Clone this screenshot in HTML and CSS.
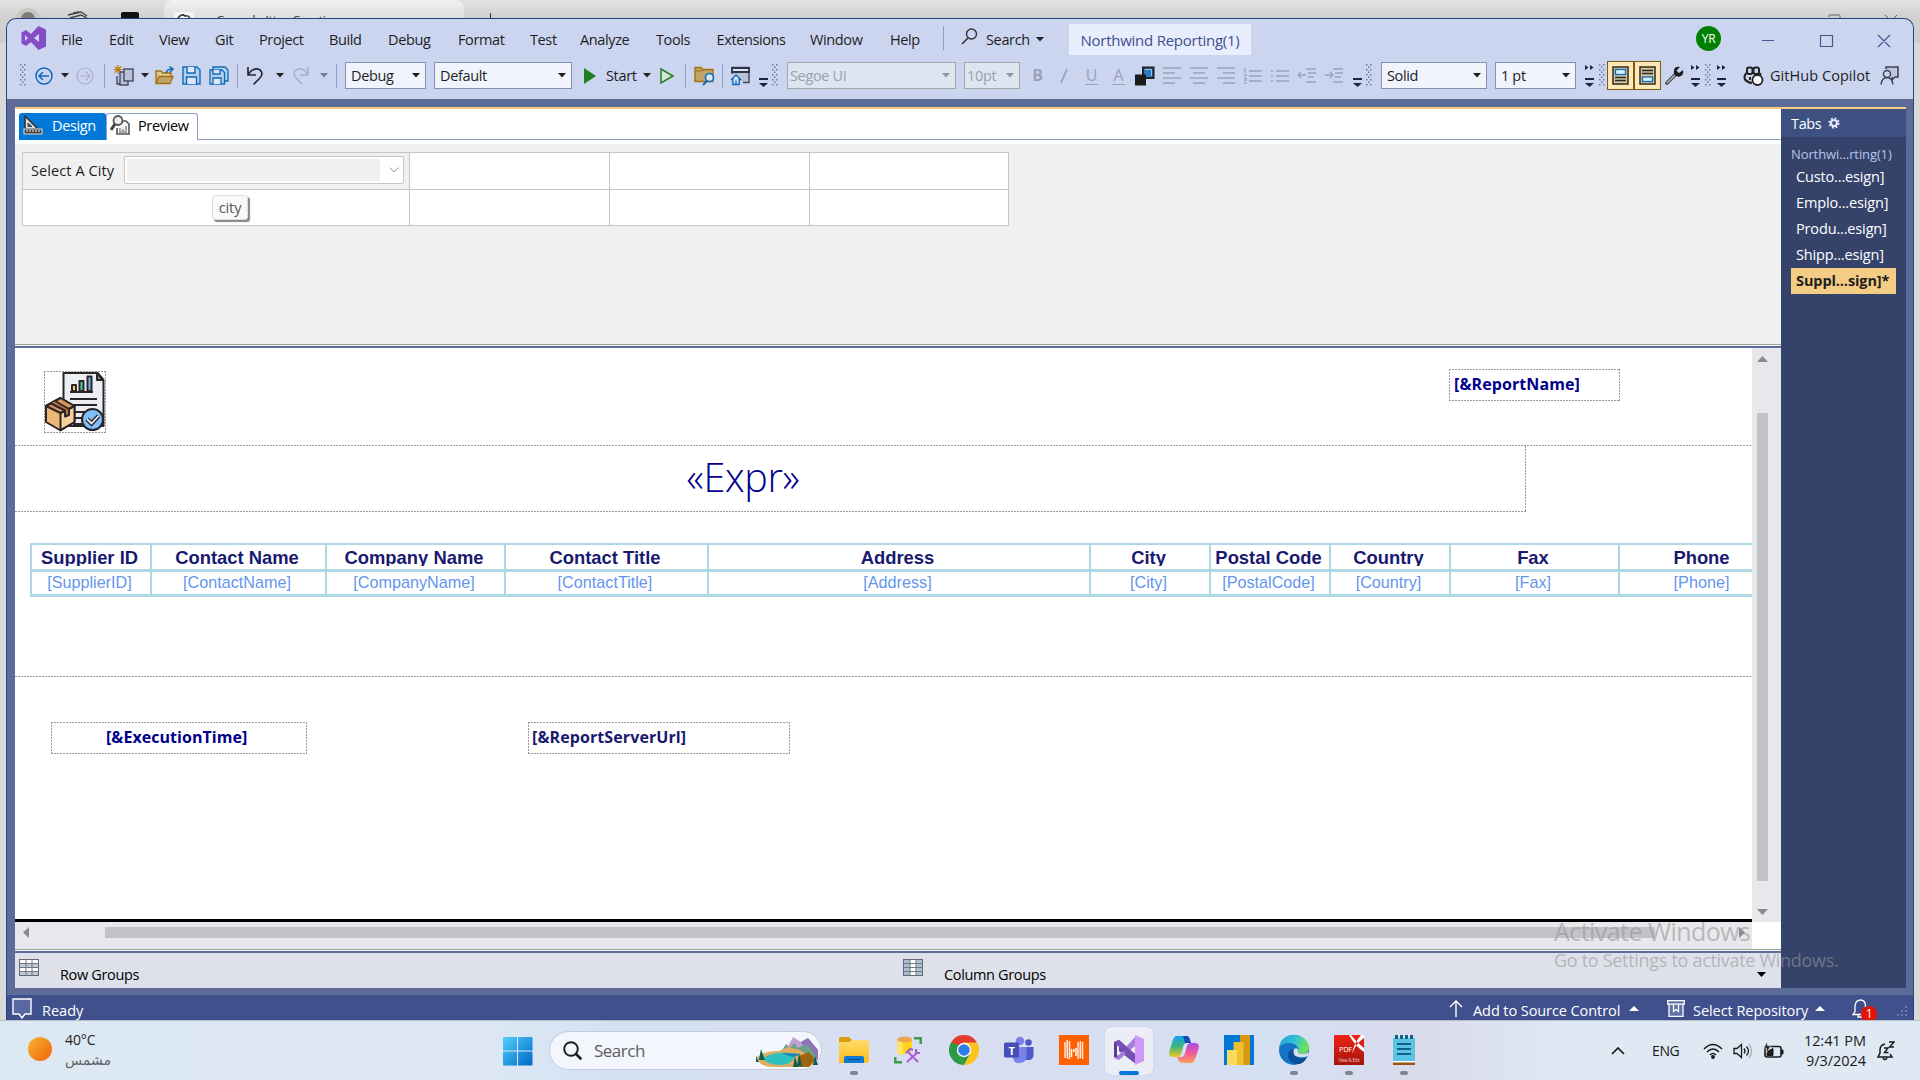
FILE: index.html
```html
<!DOCTYPE html>
<html lang="en">
<head>
<meta charset="utf-8">
<title>Northwind Reporting(1)</title>
<link rel="stylesheet" href="styles.css">
</head>
<body>
<svg class="defs" width="0" height="0">
  <defs>
    <linearGradient id="gSun" x1="0" y1="0" x2="1" y2="1"><stop offset="0" stop-color="#f5b72e"/><stop offset="1" stop-color="#f4600c"/></linearGradient>
    <linearGradient id="gWin" x1="0" y1="0" x2="1" y2="1"><stop offset="0" stop-color="#4fd0fb"/><stop offset="1" stop-color="#0067c8"/></linearGradient>
    <linearGradient id="gFold" x1="0" y1="0" x2="0" y2="1"><stop offset="0" stop-color="#ffdc6a"/><stop offset="1" stop-color="#fcbc1c"/></linearGradient>
    <linearGradient id="gEdge" x1="0" y1="0" x2="1" y2=".3"><stop offset="0" stop-color="#1f9fe0"/><stop offset=".6" stop-color="#35c6cf"/><stop offset="1" stop-color="#6fe05a"/></linearGradient>
    <linearGradient id="gCopA" x1="0" y1="0" x2="0" y2="1"><stop offset="0" stop-color="#1aa0f0"/><stop offset=".5" stop-color="#3cb878"/><stop offset="1" stop-color="#f2c81e"/></linearGradient>
    <linearGradient id="gCopB" x1="0" y1="0" x2="0" y2="1"><stop offset="0" stop-color="#a84fe8"/><stop offset=".5" stop-color="#f0589a"/><stop offset="1" stop-color="#ffa05a"/></linearGradient>
    <linearGradient id="gPdf" x1="0" y1="0" x2="0" y2="1"><stop offset="0" stop-color="#ec2418"/><stop offset="1" stop-color="#a5140c"/></linearGradient>
    <g id="grip"><path fill="#6d7ba8" d="M0 0h1.500v1.500h-1.500zM4 0h1.500v1.500h-1.500zM2 2.500h1.500v1.500h-1.500zM0 5h1.500v1.500h-1.500zM4 5h1.500v1.500h-1.500zM2 7.500h1.500v1.500h-1.500zM0 10h1.500v1.500h-1.500zM4 10h1.500v1.500h-1.500zM2 12.500h1.500v1.500h-1.500zM0 15h1.500v1.500h-1.500zM4 15h1.500v1.500h-1.500zM2 17.500h1.500v1.500h-1.500zM0 20h1.500v1.500h-1.500zM4 20h1.500v1.500h-1.500z"/></g>
    <g id="caret"><path d="M0 0h8l-4 4.500z"/></g>
    <g id="over"><path d="M0 0h9v2h-9zM0 5h9l-4.500 4z" fill="#1b2440"/></g>
    <g id="chev"><path d="M0 0l3.500 2.500-3.500 2.500zM5 0l3.500 2.500-3.500 2.500zM0 13h9v2h-9zM0 18h9l-4.500 4z" fill="#1b2440"/></g>
  </defs>
</svg>

<div class="backdrop">
  <svg class="back-left" width="150" height="18" viewBox="0 0 150 18"><circle cx="28" cy="21" r="13" fill="#c9c7c4"/><circle cx="28" cy="19" r="7" fill="#807c78"/><path d="M68 15l13-3 6 4M70 18l11-3 6 3M73 13l6 -1" fill="none" stroke="#444" stroke-width="1.300"/><rect x="121" y="12" width="18" height="9" rx="2" fill="#111"/></svg>
  <div class="back-tab"><svg width="20" height="18" viewBox="0 0 20 18"><rect width="20" height="22" y="12" rx="3" fill="#f6f6f6"/><path d="M4 18q4-5 7-2 3-1 5 2" fill="none" stroke="#333" stroke-width="1.600"/></svg><span>Console Itter Creations</span></div>
  <span class="back-plus"></span>
  <svg class="back-ctl" width="90" height="18" viewBox="0 0 90 18"><path d="M9 17v-1q0-1 1-1h9q1 0 1 1v2M65 15l4 4M77 15l-4 4" fill="none" stroke="#666"/></svg>
</div>

<div class="window">
  <header class="titlebar">
    <svg class="vs" width="25" height="26" viewBox="0 0 25 26"><path fill="#854cc7" fill-rule="evenodd" d="M17.500 1l7.500 3.500v17l-7.500 3.500-7.500-8-5 4-4.500-2.500v-11l4.500-2.500 5 4zM18 9l-5 4 5 4zM4 10v6l3-3z"/></svg>
    <nav class="menu"><span>File</span><span>Edit</span><span>View</span><span>Git</span><span>Project</span><span>Build</span><span>Debug</span><span>Format</span><span>Test</span><span>Analyze</span><span>Tools</span><span>Extensions</span><span>Window</span><span>Help</span></nav>
    <i class="vsep"></i>
    <svg class="mag" width="17" height="17" viewBox="0 0 17 17"><circle cx="10.500" cy="6" r="5" fill="none" stroke="#333" stroke-width="1.400"/><path d="M7 10l-6 6" stroke="#333" stroke-width="1.600"/></svg>
    <span class="find">Search</span>
    <svg class="find-caret" width="8" height="5"><use href="#caret" fill="#222"/></svg>
    <span class="solution">Northwind Reporting(1)</span>
    <span class="avatar">YR</span>
    <svg class="winctl" width="130" height="16" viewBox="0 0 130 16"><path d="M0 8.500h12M58.500 3.500h12v11h-12zM116 3l12 12M128 3l-12 12" fill="none" stroke="#47578d" stroke-width="1.200"/></svg>
  </header>

  <div class="toolbar">
    <svg width="6" height="23"><use href="#grip"/></svg>
    <svg width="18" height="18" viewBox="0 0 18 18" fill="none" stroke="#0c6ab8" stroke-width="1.500"><circle cx="9" cy="9" r="8"/><path d="M14 9h-9.500M8 5l-4 4 4 4"/></svg>
    <svg width="8" height="5"><use href="#caret" fill="#222"/></svg>
    <svg width="18" height="18" viewBox="0 0 18 18" fill="none" stroke="#aab0c8" stroke-width="1.200"><circle cx="9" cy="9" r="8"/><path d="M4 9h9.500M10 5l4 4-4 4"/></svg>
    <i class="vsep"></i>
    <svg width="21" height="22" viewBox="0 0 21 22"><path d="M5 0v9M.5 4.500h9M1.800 1.500l6.400 6M8.200 1.500l-6.400 6" stroke="#b87d0f" stroke-width="1.200"/><g fill="#b9c2dc" stroke="#3b4054" stroke-width="1.300"><path d="M4 11v8h5"/><rect x="7" y="7" width="8" height="13"/><rect x="11" y="4" width="9" height="12"/></g></svg>
    <svg width="8" height="5"><use href="#caret" fill="#222"/></svg>
    <svg width="20" height="19" viewBox="0 0 20 19"><path d="M1 17v-12h5l2 2h8v4" fill="#dcc899" stroke="#a4710a" stroke-width="1.400"/><path d="M1 17.500l3-7h14l-3 7z" fill="#c0a468" stroke="#a4710a" stroke-width="1.300"/><path d="M11 7q1-4 6-4M14.500 .5l3.500 2.500-3 3" fill="none" stroke="#0c6ab8" stroke-width="1.500"/></svg>
    <svg width="19" height="19" viewBox="0 0 19 19" fill="#b4cfea" stroke="#0c6ab8" stroke-width="1.400"><path d="M1 1h14l3 3v14h-17z"/><path d="M5 1v6h8v-6M4.500 18v-7h10v7" fill="#dce6f6"/></svg>
    <svg width="20" height="19" viewBox="0 0 20 19" fill="#b4cfea" stroke="#0c6ab8" stroke-width="1.300"><path d="M4 4v-3h12l3 3v11h-3"/><path d="M1 4h12l2.500 2.500v11.500h-14.500z"/><path d="M4 4v4h7v-4M4 18v-6h8v6" fill="#dce6f6"/></svg>
    <i class="vsep"></i>
    <svg width="18" height="20" viewBox="0 0 18 20" fill="none" stroke="#26293a" stroke-width="1.700"><path d="M1 1v8h8M1.500 8q5-7 11-4.500 5 4 0 9l-6 6"/></svg>
    <svg width="8" height="5"><use href="#caret" fill="#222"/></svg>
    <svg width="18" height="20" viewBox="0 0 18 20" fill="none" stroke="#a9afc6" stroke-width="1.500"><path d="M17 1v8h-8M16.500 8q-5-7-11-4.500-5 4 0 9l6 6"/></svg>
    <svg width="8" height="5"><use href="#caret" fill="#777c92"/></svg>
    <i class="vsep"></i>
    <span class="combo w81"><b>Debug</b><svg width="8" height="5"><use href="#caret" fill="#1e1e1e"/></svg></span>
    <span class="combo w138"><b>Default</b><svg width="8" height="5"><use href="#caret" fill="#1e1e1e"/></svg></span>
    <svg width="14" height="18"><path d="M1 1l12 8-12 8z" fill="#1f801f"/></svg>
    <span class="tt">Start</span>
    <svg width="8" height="5"><use href="#caret" fill="#222"/></svg>
    <svg width="16" height="18"><path d="M2 2l12 7-12 7z" fill="#d5e6dc" stroke="#1f801f" stroke-width="1.500"/></svg>
    <i class="vsep"></i>
    <svg width="21" height="20" viewBox="0 0 21 20"><path d="M1 15.500v-14h6l2 2h10v12z" fill="#c0a468" stroke="#a4710a" stroke-width="1.400"/><path d="M1 5h7l2-1.500" fill="none" stroke="#a4710a"/><circle cx="15.500" cy="11.500" r="4" fill="#d8e4f4" stroke="#0c6ab8" stroke-width="1.600"/><path d="M13 15l-4 4" stroke="#0c6ab8" stroke-width="1.900"/></svg>
    <i class="vsep"></i>
    <svg width="21" height="20" viewBox="0 0 21 20"><path d="M2 8v-6.500h17v15h-6" fill="#b9c0d8" stroke="#444960" stroke-width="1.500"/><path d="M2 2h17v4h-17z" fill="#dfe4f2" stroke="#2f3347" stroke-width="1.800"/><path d="M1 14l5-5 5 5M2.800 13v5.500h6.400v-5.500M6 18.500v-4" fill="#dce8f8" stroke="#0c6ab8" stroke-width="1.400"/></svg>
    <svg class="low" width="9" height="9"><use href="#over"/></svg>
    <svg width="6" height="23"><use href="#grip"/></svg>
    <span class="combo off w169"><b>Segoe UI</b><svg width="8" height="5"><use href="#caret" fill="#8e95a5"/></svg></span>
    <span class="combo off w56"><b>10pt</b><svg width="8" height="5"><use href="#caret" fill="#8e95a5"/></svg></span>
    <span class="fmt bold">B</span>
    <svg width="12" height="18"><path d="M9 2l-6 14" stroke="#9ba2bd" stroke-width="1.800"/></svg>
    <span class="fmt under">U</span>
    <span class="fmt color">A</span>
    <svg width="20" height="20" viewBox="0 0 20 20"><rect x="8" y="1.500" width="10.500" height="10.500" fill="#2b7cc0" stroke="#222" stroke-width="2"/><path d="M10 3.500h6.500v6.500" fill="none" stroke="#9cc4e8"/><rect y="8.500" width="11" height="11" fill="#1a1a1a"/></svg>
    <svg class="ln" width="20" height="18"><path d="M1 1h18M1 6h12M1 11h18M1 16h12"/></svg>
    <svg class="ln" width="20" height="18"><path d="M1 1h18M4 6h12M1 11h18M4 16h12"/></svg>
    <svg class="ln" width="20" height="18"><path d="M1 1h18M7 6h12M1 11h18M7 16h12"/></svg>
    <svg class="ln" width="20" height="16"><path d="M6 3h13M6 8h13M6 13h13M2 0v5M1 7h3M1 10h3M1 12h3M1 15h3"/></svg>
    <svg class="ln" width="20" height="16"><path d="M6 3h13M6 8h13M6 13h13M1 3h2M1 8h2M1 13h2"/></svg>
    <svg class="ln" width="20" height="16"><path d="M9 1h10M11 5h8M11 9h6M9 14h10M1 7h8M4 4l-3 3 3 3"/></svg>
    <svg class="ln" width="20" height="16"><path d="M9 1h10M11 5h8M11 9h6M9 14h10M1 7h8M6 4l3 3-3 3"/></svg>
    <svg class="low" width="9" height="9"><use href="#over"/></svg>
    <svg width="6" height="23"><use href="#grip"/></svg>
    <span class="combo w106"><b>Solid</b><svg width="8" height="5"><use href="#caret" fill="#1e1e1e"/></svg></span>
    <span class="combo w81"><b>1 pt</b><svg width="8" height="5"><use href="#caret" fill="#1e1e1e"/></svg></span>
    <svg width="9" height="22"><use href="#chev"/></svg>
    <svg width="6" height="23"><use href="#grip"/></svg>
    <span class="toggle"><svg width="17" height="19" viewBox="0 0 17 19"><rect x="1" y="1" width="15" height="17" fill="#cfc4a2" stroke="#3a3624" stroke-width="1.600"/><rect x="3.500" y="3.500" width="10" height="5" fill="#dceefa" stroke="#0c6ab8" stroke-width="1.300"/><path d="M3 11.500h11M3 14.500h11" stroke="#2a281e" stroke-width="1.300"/></svg></span>
    <span class="toggle"><svg width="17" height="19" viewBox="0 0 17 19"><rect x="1" y="1" width="15" height="17" fill="#cfc4a2" stroke="#3a3624" stroke-width="1.600"/><rect x="3.500" y="11" width="10" height="4.500" fill="#dceefa" stroke="#0c6ab8" stroke-width="1.300"/><path d="M3 4.500h11M3 7.500h11" stroke="#2a281e" stroke-width="1.300"/></svg></span>
    <svg width="19" height="19" viewBox="0 0 19 19"><path d="M2 17l8-8" stroke="#444" stroke-width="3.600" stroke-linecap="round"/><path d="M2 17l8-8" stroke="#b9bfd2" stroke-width="1.200"/><path d="M15 1q-5-1-6 3-1 3 1 5.500 3 2 6 .5 3-2 2-6l-4 3-2.500-2.500z" fill="#1c1c1c"/></svg>
    <svg width="9" height="22"><use href="#chev"/></svg>
    <svg width="6" height="23"><use href="#grip"/></svg>
    <svg width="9" height="22"><use href="#chev"/></svg>
    <svg width="21" height="20" viewBox="0 0 21 20"><g fill="none" stroke="#222" stroke-width="2"><rect x="4" y="1.500" width="5.500" height="6.500" rx="2"/><rect x="10.500" y="1.500" width="5.500" height="6.500" rx="2"/><path d="M3.500 7q-3 3-1.500 6.500 2.500 3 7 3.500M16.500 7l1.500 2M7 11v3"/></g><circle cx="14.500" cy="14" r="5" fill="#fff" stroke="#222" stroke-width="1.800"/></svg>
    <span class="tt copilot">GitHub Copilot</span>
    <svg width="20" height="20" viewBox="0 0 20 20" fill="none" stroke="#3b4054" stroke-width="1.500"><path d="M6 3v-2h12v10h-3l-3 3v-3" fill="#bcc5de"/><circle cx="7" cy="8" r="3.500" fill="#ccd5f0"/><path d="M1 18.500q1-7 6-7t6 7"/></svg>
  </div>

  <div class="workspace">
    <main class="designer">
      <div class="tabstrip">
        <div class="tab active"><svg width="20" height="20" viewBox="0 0 20 20"><path d="M2 1v13l13 0z" fill="#ddd" stroke="#333" stroke-width="1.600"/><path d="M5 8v3.500h4z" fill="#0078d7" stroke="#444"/><rect x="1" y="14" width="18" height="5" fill="#444" stroke="#ddd"/><path d="M4 15v2M7 15v2M10 15v2M13 15v2M16 15v2" stroke="#eee"/></svg><span>Design</span></div>
        <div class="tab"><svg width="20" height="20" viewBox="0 0 20 20"><path d="M9 6h7l3 3v10h-12v-6" fill="#f4f4f4" stroke="#555" stroke-width="1.600"/><circle cx="8" cy="5.500" r="4.500" fill="#eee" stroke="#555" stroke-width="1.800"/><path d="M5 9l-4 6" stroke="#444" stroke-width="3"/><path d="M10 16v-3M13 16v-2M16 16v-5M9 17h8" stroke="#555"/></svg><span>Preview</span></div>
        <div class="tabrest"></div>
      </div>
      <section class="params">
        <div class="pgrid">
          <div class="pcell first"><span>Select A City</span><div class="pick"><div></div><svg width="10" height="6"><path d="M.5 .5l4.500 4.500 4.500-4.500" fill="none" stroke="#999"/></svg></div></div>
          <div class="pcell"></div><div class="pcell"></div><div class="pcell"></div>
          <div class="pcell"><span class="tip">city</span></div><div class="pcell"></div><div class="pcell"></div><div class="pcell"></div>
        </div>
      </section>
      <div class="split"></div>
      <div class="surface">
        <div class="report">
          <div class="band head">
            <div class="pic dash"><svg width="60" height="60" viewBox="0 0 60 60"><g stroke="#2a2528" stroke-width="2" stroke-linejoin="round"><path d="M18.500 1h34l6 7v46h-40z" fill="#ebeff4"/><path d="M52 1v7h6z" fill="#8b8790"/><path d="M25 20h23M25 27h27M25 33h27M28 40h22M28 46h16M28 52h12" fill="none"/><path d="M27 19v-6h4v6z" fill="#f6d36b"/><path d="M34.500 19v-10h4v10z" fill="#4fcf9c"/><path d="M42.500 19v-14.500h4v14.500z" fill="#6fb4f4"/><path d="M1 34l14.500-8 14 8v16l-14 8.500-14.500-8.500z" fill="#ecb974"/><path d="M15.500 41v17l14-8v-16z" fill="#f6d19c"/><path d="M1 34l14.500 7 14-7-14-8z" fill="#d9955a"/><path d="M6 31.500l14 7v6l4-1.500v-6l-14-8" fill="#b97640"/><circle cx="47.500" cy="47.500" r="10.500" fill="#7fc0fb"/></g><path d="M42 47l4.500 4.500 7-7.500" fill="none" stroke="#2a2528" stroke-width="4.500"/><path d="M42 47l4.500 4.500 7-7.500" fill="none" stroke="#ebeff4" stroke-width="1.800"/></svg></div>
            <div class="fieldbox dash name">[&amp;ReportName]</div>
          </div>
          <div class="title"><span>«Expr»</span></div>
          <div class="tablix">
            <div class="trow th"><span>Supplier ID</span><span>Contact Name</span><span>Company Name</span><span>Contact Title</span><span>Address</span><span>City</span><span>Postal Code</span><span>Country</span><span>Fax</span><span>Phone</span></div>
            <div class="trow td"><span>[SupplierID]</span><span>[ContactName]</span><span>[CompanyName]</span><span>[ContactTitle]</span><span>[Address]</span><span>[City]</span><span>[PostalCode]</span><span>[Country]</span><span>[Fax]</span><span>[Phone]</span></div>
          </div>
          <div class="band foot">
            <div class="fieldbox dash exec">[&amp;ExecutionTime]</div>
            <div class="fieldbox dash url">[&amp;ReportServerUrl]</div>
          </div>
        </div>
        <div class="vscroll"><svg width="11" height="6"><path d="M0 6h11l-5.500-6z" fill="#868999"/></svg><div class="vthumb"></div><svg width="11" height="6"><path d="M0 0h11l-5.500 6z" fill="#868999"/></svg></div>
        <div class="hscroll"><svg width="6" height="11"><path d="M6 0v11l-6-5.500z" fill="#868999"/></svg><div class="hthumb"></div><svg width="6" height="11"><path d="M0 0v11l6-5.500z" fill="#868999"/></svg></div>
        <div class="corner"></div>
      </div>
      <div class="split low-split"></div>
      <div class="groups">
        <div class="grp"><svg width="20" height="17" viewBox="0 0 20 17"><rect x=".5" y=".5" width="19" height="16" fill="#fff" stroke="#666"/><path d="M1 4h18v4h-18zM1 12h18v4h-18z" fill="#b5cbe0"/><path d="M0 4.500h20M0 8.500h20M0 12.500h20M7 0v17M13 0v17" stroke="#777"/></svg><span>Row Groups</span></div>
        <div class="grp"><svg width="20" height="17" viewBox="0 0 20 17"><rect x=".5" y=".5" width="19" height="16" fill="#a9c0dc" stroke="#666"/><path d="M7 1h6v15h-6z" fill="#fff"/><path d="M0 4.500h20M0 8.500h20M0 12.500h20M7 0v17M13 0v17" stroke="#777"/></svg><span>Column Groups</span><svg class="gcaret" width="9" height="6"><path d="M0 0h9l-4.500 5z"/></svg></div>
      </div>
    </main>
    <aside class="docs">
      <div class="docs-head"><span>Tabs</span><svg width="12" height="14" viewBox="-7 -7 14 14"><circle r="3.500" fill="none" stroke="#e4e8f8" stroke-width="2.600"/><circle r="5.600" fill="none" stroke="#e4e8f8" stroke-width="2" stroke-dasharray="2.200 2.200"/></svg></div>
      <div class="proj">Northwi...rting(1)</div>
      <div class="doc">Custo...esign]</div>
      <div class="doc">Emplo...esign]</div>
      <div class="doc">Produ...esign]</div>
      <div class="doc">Shipp...esign]</div>
      <div class="doc sel">Suppl...sign]*</div>
    </aside>
  </div>

  <footer class="status">
    <svg width="20" height="21" viewBox="0 0 20 21"><path d="M1 1h18v15h-6l-3 4-3-4h-6z" fill="#5868a0" stroke="#fff" stroke-width="1.400"/></svg>
    <span class="ready">Ready</span>
    <svg width="14" height="17" viewBox="0 0 14 17"><path d="M7 17v-16M1 7l6-6 6 6" fill="none" stroke="#fff" stroke-width="1.400"/></svg>
    <span class="src">Add to Source Control</span>
    <svg width="10" height="5"><path d="M0 5h10l-5-5z" fill="#fff"/></svg>
    <svg class="repo-i" width="18" height="17" viewBox="0 0 18 17"><path d="M.7 .7h16.600v3.500h-16.600zM2 4.500v12h14v-12M6.500 4.500v7l2.500-2 2.500 2v-7" fill="#6272a8" stroke="#fff" stroke-width="1.300"/></svg>
    <span class="repo">Select Repository</span>
    <svg width="10" height="5"><path d="M0 5h10l-5-5z" fill="#fff"/></svg>
    <span class="bell"><svg width="17" height="19" viewBox="0 0 17 19"><path d="M1 15.500l2-3v-6q1-5.500 5.500-5.500t5 5.500v6l2 3zM6 16v2h5" fill="none" stroke="#fff" stroke-width="1.300"/></svg><em>1</em></span>
    <svg class="rgrip" width="12" height="12"><path d="M9 0h2v2h-2zM9 4h2v2h-2zM5 4h2v2h-2zM9 8h2v2h-2zM5 8h2v2h-2zM1 8h2v2h-2z" fill="#6f7aa8"/></svg>
  </footer>
</div>

<div class="watermark"><div>Activate Windows</div><p>Go to Settings to activate Windows.</p></div>

<div class="taskbar">
  <svg class="sun" width="24" height="24"><circle cx="12" cy="12" r="12" fill="url(#gSun)"/></svg>
  <div class="weather"><span>40°C</span><span class="ar" lang="ar">مشمس</span></div>
  <svg class="start" width="30" height="30" viewBox="0 0 30 30" fill="url(#gWin)"><path d="M0 2q0-1 1-1h13v13.500h-14zM15 1h13.500q1 0 1 1v12.500h-14.500zM0 15.500h14v14h-13q-1 0-1-1zM15 15.500h14.500v13q0 1-1 1h-13.500z"/></svg>
  <div class="search">
    <svg width="19" height="19" viewBox="0 0 19 19"><circle cx="8" cy="8" r="6.800" fill="none" stroke="#1c1c1c" stroke-width="1.900"/><path d="M13 13l4.500 4.500" stroke="#1c1c1c" stroke-width="2.600" stroke-linecap="round"/></svg>
    <span>Search</span>
    <svg class="scene" width="64" height="32" viewBox="0 0 64 32"><path d="M31 14l7-13 8 5 7-4 10 12v10h-30z" fill="#c3a0d4"/><path d="M46 6l7-4 10 12v10l-12-6z" fill="#8c74b8"/><path d="M24 16l4-3 3-5 4 4 4-5 4 5 8-4 4 4 6 8-3 8-20 2z" fill="#6f9f86"/><path d="M2 21q10-7 22-6l9-4 12 3 8 5 8 7q-4 5-12 5h-32q-14-1-15-10z" fill="#e0ae62"/><path d="M44 20l10-4 6 8-6 7h-12z" fill="#9c6410"/><path d="M8 22q10-6 24-5l14 1q-8 2-8 6-4 5-14 5-12 0-16-7z" fill="#2dc0c0"/><path d="M26 17l20 1-8 3z" fill="#1782bb"/><path d="M1 20l3 6h-3zM6 13l4 11h-6zM40 20l3 11h-5zM44 17l3 13h-5zM60 20l3 9h-5z" fill="#0e5f50"/></svg>
  </div>
  <div class="apps">
    <div class="app run"><svg width="30" height="30" viewBox="0 0 30 30"><path d="M0 6v-2q0-2 2-2h8l3 3h16v8h-29z" fill="#dc9b0a"/><path d="M0 7h10l3-2h15q2 0 2 2v18q0 3-3 3h-27z" fill="url(#gFold)"/><path d="M5 28v-5q0-2 2-2h16q2 0 2 2v5z" fill="#0f7bd0"/><path d="M8.500 24.500h13" stroke="#0a4f94"/></svg></div>
    <div class="app"><svg width="30" height="30" viewBox="0 0 30 30"><path d="M3 4v14q5 3 8 1l7-3v-12z" fill="#ffd21c"/><path d="M3 4v14l6 1.500v-15z" fill="#ffe46b"/><ellipse cx="10.500" cy="4.500" rx="7.500" ry="3" fill="#eea350"/><path d="M20 2h8v7h-2.500v-4.500h-5.500zM0 22h2.500v4h5.500v2.500h-8z" fill="#3f9e4d"/><path d="M13 16l11 11M24 17l-11 10M12 18l4-4 3 1M22 14v4h4" stroke="#a95fd2" stroke-width="2" fill="none"/></svg></div>
    <div class="app"><svg width="30" height="30" viewBox="-15 -15 30 30"><path d="M0 0L-13-7.500A15 15 0 0 1 13-7.500z" fill="#e33b2e"/><path d="M0 0L13-7.500A15 15 0 0 1 0 15z" fill="#fcc31e"/><path d="M0 0L0 15A15 15 0 0 1-13-7.500z" fill="#2b9a48"/><path d="M0-7.500h13L6 4zM6 4L0 15-6 4z" fill="#fcc31e"/><path d="M-6.500 3.500L-13-7.500-5-5zM6 4L0 15-6 4z" fill="#2b9a48"/><path d="M6.500 3.500L0 15h1Q11 13 13-7H0z" fill="#fcc31e"/><circle r="7.200" fill="#fff"/><circle r="5.800" fill="#2f7de9"/></svg></div>
    <div class="app"><svg width="30" height="30" viewBox="0 0 30 30"><circle cx="24.500" cy="7.500" r="3.300" fill="#5059c9"/><path d="M20 12h9.500v8q0 5-5 5h-4.500z" fill="#5059c9"/><circle cx="16" cy="6" r="4.300" fill="#7b83eb"/><path d="M9 12h13.500v9q0 7-7 7t-6.500-7z" fill="#7b83eb"/><rect y="7.500" width="15" height="15" rx="1.500" fill="#464eb8"/><text x="7.500" y="19.500" text-anchor="middle" class="tletter">T</text></svg></div>
    <div class="app"><svg width="30" height="30" viewBox="0 0 30 30"><rect width="30" height="30" fill="#ff6000"/><path d="M6 7v16M8.200 5v18.500M10.500 6v18M19 7v17M21.300 6v17M23.500 7v17" stroke="#ffe9da" stroke-width="1.500"/><path d="M12.500 14v8M14.800 17v-3M17 13v8" stroke="#fff" stroke-width="1.500"/></svg></div>
    <div class="app on"><svg width="30" height="30" viewBox="0 0 30 30"><path d="M0 7l5-2 17 15v9l-17-13v-5l-2-1v10l3 2-2 2-4-2z" fill="#6a46a6"/><path d="M0 7l3 0v16l-3 0z" fill="#5c3a94"/><path d="M22 1v9L5 25l-5-2v-1l3 0z" fill="#a57be0"/><path d="M5 5l17 15v9L3 10 0 7z" fill="#7650b4"/><path d="M21 0l9 4v22l-9 4z" fill="#cf97f7"/></svg></div>
    <div class="app"><svg width="30" height="30" viewBox="0 0 30 30"><path d="M8 1h9q3 0 4 4l1 3h-4q-3 0-4 4l-2 7q-1 3-4 3h-4q-5 0-3.500-6l3-10q1.500-5 4.500-5z" fill="url(#gCopA)"/><path d="M14 1h4q2 0 3 4l1 3h-6z" fill="#1a46b8"/><path d="M22 28h-9q-3 0-4-4l-1-2h4q3 0 4-4l2-7q1-3 4-3h4q5 0 3.500 6l-3 9q-1.500 5-4.500 5z" fill="url(#gCopB)"/></svg></div>
    <div class="app"><svg width="30" height="30" viewBox="0 0 30 30"><rect width="30" height="30" fill="#0078d7"/><path d="M16 0h10v30h-10z" fill="#d9970f"/><path d="M9.500 7h10v23h-10z" fill="#edc02e"/><path d="M3 15h10v15h-10z" fill="#f9da5c"/></svg></div>
    <div class="app run"><svg width="30" height="30" viewBox="0 0 30 30"><circle cx="15" cy="15" r="15" fill="#1374c8"/><path d="M0 13q2-13 15-13 13 1 15 12 0 7-7 7-6 0-4-3 1-3-1-5-3-3-8-3-7 0-10 5z" fill="url(#gEdge)"/><path d="M28 22q-8 3-12-1-3-3-2-7-6 2-5 8 3 8 11 7 5-1 8-7z" fill="#0d4f94"/><path d="M15 14q-2 7 5 8 5 1 9-1l1-4q-3 2-7 2-5 0-4-3 0-4-4-2z" fill="#d6def0"/></svg></div>
    <div class="app run"><svg width="30" height="30" viewBox="0 0 30 30"><rect width="30" height="30" fill="url(#gPdf)"/><path d="M17 0q6 8 13 13v4q-9-6-15-17zM30 0h-3q-7 8-9 19 4-11 12-16z" fill="#fff"/><text x="5" y="17" class="pdf">PDF</text><text x="4.500" y="27" class="pdfs">View &amp; Edit</text></svg></div>
    <div class="app run"><svg width="22" height="30" viewBox="0 0 22 30"><path d="M0 26h22v4h-22z" fill="#9c5210"/><path d="M0 3h22v24h-22z" fill="#5cc5e4"/><path d="M0 26h22v1.500h-22z" fill="#fff"/><path d="M4 9h14M4 14h14M4 19h14" stroke="#0d6184" stroke-width="1.800"/><path d="M3.500 0v4M8.500 0v4M13.500 0v4M18.500 0v4" stroke="#0d6184" stroke-width="3"/></svg></div>
  </div>
  <div class="tray">
    <svg width="14" height="8"><path d="M1 7l6-6 6 6" fill="none" stroke="#1a1a1a" stroke-width="1.700"/></svg>
    <span class="lang">ENG</span>
    <svg width="20" height="16" viewBox="0 0 20 16" fill="none" stroke="#1a1a1a" stroke-width="1.500"><path d="M1 6q9-9 18 0M4 9q6-6 12 0M7 12q3-3 6 0"/><circle cx="10" cy="14" r="1.200" fill="#1a1a1a"/></svg>
    <svg width="20" height="16" viewBox="0 0 20 16" fill="none" stroke="#1a1a1a" stroke-width="1.300"><path d="M1 5.500h3l4.500-4v13l-4.500-4h-3zM11 5.500q2 2.500 0 5M13.500 3.500q4 4.500 0 9"/><path d="M16 1q5 7 0 14" stroke="#aab"/></svg>
    <svg width="21" height="17" viewBox="0 0 21 17"><rect x="2" y="4.500" width="16" height="10.500" rx="2" fill="none" stroke="#1a1a1a" stroke-width="1.600"/><path d="M18.500 8h1.500v4h-1.500zM4 13.500v-4l6-3v7z" fill="#1a1a1a" stroke="#1a1a1a"/><path d="M4 0l-3 6h2.500v5l4-7h-3z" fill="#1a1a1a" stroke="#dfe8f4" stroke-width=".5"/></svg>
    <div class="clock"><span>12:41 PM</span><span>9/3/2024</span></div>
    <svg width="18" height="20" viewBox="0 0 18 20"><path d="M8 3q-5 1-5 6v3l-2 4h14l-2-3M6 17q2 3 4 0" fill="none" stroke="#1a1a1a" stroke-width="1.500"/><path d="M12 1h5l-4.500 5h4.500M7 7h4l-3.500 4.500h4" fill="none" stroke="#1a1a1a" stroke-width="1.400"/></svg>
  </div>
</div>
</body>
</html>
```
FILE: styles.css
```css
* { box-sizing: border-box; }
body {
  margin: 0;
  width: 1920px;
  height: 1080px;
  overflow: hidden;
  position: relative;
  background: linear-gradient(#cfcfcf 43px, #d9d9d9 43px);
  font-family: "Open Sans", "Noto Sans", sans-serif;
  font-size: 14.500px;
  letter-spacing: -.35px;
  color: #1e1e1e;
}
svg { display: block; flex: none; }
span, div { white-space: nowrap; }
.defs { position: absolute; }

/* Browser window behind the IDE */
.backdrop { height: 18px; display: flex; background: linear-gradient(#e2e2e2, #cfcfcf); }
.back-left { margin-right: 14px; }
.back-tab { width: 300px; display: flex; gap: 22px; padding-left: 10px; background: linear-gradient(#f1f1f1, #dedede); border-radius: 9px 9px 0 0; }
.back-tab span { padding-top: 11px; color: #444; font-size: 13px; line-height: 18px; }
.back-plus { width: 1px; height: 6px; margin: 13px 0 0 26px; background: #333; }
.back-ctl { margin-left: auto; margin-right: 10px; }

.window {
  position: absolute;
  left: 6px;
  top: 18px;
  width: 1908px;
  height: 1002px;
  border: 1px solid #26427f;
  border-bottom: 0;
  border-radius: 10px 10px 0 0;
  background: #5d6b99;
  overflow: hidden;
  display: flex;
  flex-direction: column;
}
.titlebar { height: 38px; background: #ccd5f0; display: flex; align-items: center; padding-left: 14px; flex: none; }
.vs { margin-right: 15px; }
.menu { margin: 2px 1px 0 0; letter-spacing: -.38px; display: grid; grid-template-columns: 48px 50px 56px 44px 70px 59px 70px 72px 50px 76px 60.500px 93.500px 80px 52px; }
.vsep { display: block; width: 1px; height: 24px; background: #8e9cc8; }
.mag { margin: -4px 8px 0 17px; }
.find { width: 50px; margin-top: 2px; }
.find-caret { margin-top: 2px; }
.solution { width: 182px; height: 31px; margin-left: 25px; background: #e8eefe; color: #40508d; line-height: 32px; text-align: center; font-size: 15px; letter-spacing: -.25px; font-weight: 500; margin-top: 2px; }
.avatar { width: 25px; height: 25px; margin-left: 445px; border-radius: 50%; background: #008000; color: #fff; font-size: 12px; text-align: center; line-height: 25px; }
.winctl { margin-left: 41px; margin-top: 4px; }

.toolbar {
  height: 42px;
  flex: none;
  padding: 0 0 5px 13px;
  background: #ccd5f0;
  display: grid;
  align-items: center;
  justify-items: start;
  grid-template-columns: 15px 26px 15px 28px 9px 28px 14px 27px 27px 28px 10px 29px 15px 29px 16px 9px 89px 149px 23px 37px 16px 26px 9px 28px 8px 29px 13px 15px 177px 67px 27px 27px 27px 23px 27px 27px 27px 27px 27px 27px 27px 29px 13px 15px 114px 90px 14px 8px 27px 31px 26px 14px 12px 26px 27px 110px 30px;
}
.combo { height: 27px; display: flex; align-items: center; justify-content: space-between; padding: 0 5px; border: 1px solid #8591b0; background: #f1f4fd; }
.combo b { font-weight: 400; }
.combo.off { border-color: #a0a6aa; background: #dee5f1; color: #9a9fae; padding-left: 2px; }
.w81 { width: 81px; }
.w138 { width: 138px; }
.w169 { width: 169px; }
.w56 { width: 56px; }
.w106 { width: 106px; }
.low { margin-top: 14px; }
.copilot { letter-spacing: .05px; }
.fmt { width: 13px; line-height: 17px; text-align: center; color: #9ba2bd; font-size: 16px; }
.bold { font-weight: 700; }
.under, .color { border-bottom: 1.500px solid #9ba2bd; }
.ln { fill: none; stroke: #9ba2bd; stroke-width: 1.300px; }
.toggle { width: 27px; height: 29px; display: flex; align-items: center; justify-content: center; background: #fde6b8; border: 1px solid #7c5a14; }

.workspace { flex: 1; display: flex; margin: 8px 7px 7px 8px; border-top: 2px solid #f5cc84; min-height: 0; }
.designer { width: 1766px; display: flex; flex-direction: column; background: #fff; }
.tabstrip { height: 35px; padding: 4px 0 0 4px; display: flex; flex: none; }
.tab { display: flex; align-items: center; gap: 8px; height: 27px; width: 92px; padding: 0 0 4px 3px; border: 1px solid #8e9cc8; border-bottom: 0; border-radius: 3px 3px 0 0; color: #000; }
.tab.active { width: 87px; gap: 9px; background: #0078d7; border-color: #0078d7; color: #fff; }
.tabrest { flex: 1; height: 27px; border-bottom: 1px solid #8e9cc8; }
.params { height: 200px; flex: none; background: #f0f0f0; padding: 8px 7px; }
.pgrid { width: 987px; display: grid; grid-template-columns: 387px 200px 200px 199px; grid-template-rows: 37px 36px; border: solid #c6c6c6; border-width: 1px 0 0 1px; }
.pcell { background: #fff; border: solid #c6c6c6; border-width: 0 1px 1px 0; }
.pcell.first { background: #f0f0f0; display: flex; align-items: center; justify-content: space-between; padding: 0 5px 2px 8px; letter-spacing: .1px; }
.pick { width: 280px; height: 28px; border: 1px solid #c6c6c6; border-radius: 2px; background: #fff; display: flex; align-items: center; gap: 9px; padding: 2px; }
.pick div { width: 253px; height: 22px; background: #f0f0f0; }
.tip { display: block; width: 36px; height: 25px; margin: 5px 0 0 189px; text-align: center; line-height: 23px; color: #575757; background: #f9f9f9; border: 1px solid #ddd; border-radius: 3px; box-shadow: 2px 2px 1px #888; letter-spacing: -.1px; }
.split { height: 4px; flex: none; background: linear-gradient(#a0a0a0 1px, #f4f4f4 1px 2px, #5d6b99 2px); }

.surface { height: 601px; flex: none; display: grid; grid-template-columns: 1737px 29px; grid-template-rows: 574px 27px; }
.report {
  --dx: repeating-linear-gradient(90deg, #999 0 2px, transparent 2px 3px);
  --dy: repeating-linear-gradient(#999 0 2px, transparent 2px 3px);
  overflow: hidden;
  border-bottom: 3px solid #000;
}
.dash { background: var(--dx) top / 100% 1px no-repeat, var(--dx) bottom / 100% 1px no-repeat, var(--dy) left / 1px 100% no-repeat, var(--dy) right / 1px 100% no-repeat; }
.band { display: flex; }
.head { height: 98px; background: var(--dx) bottom / 100% 1px no-repeat; padding: 21px 132px 0 29px; justify-content: space-between; }
.pic { width: 62px; height: 62px; margin-top: 2px; padding: 1px; }
.fieldbox { height: 32px; color: #00008b; font-weight: 700; font-size: 16px; letter-spacing: .1px; line-height: 31px; padding-left: 5px; }
.name { width: 171px; }
.title { width: 1511px; height: 66px; background: var(--dx) bottom / 100% 1px no-repeat, var(--dy) right / 1px 100% no-repeat; color: #00008b; font-size: 39.500px; font-weight: 300; letter-spacing: -.3px; line-height: 62px; padding-right: 55px; text-align: center; }
.tablix { width: 1753px; margin: 31px 0 0 15px; border-left: 2px solid #add8e6; border-top: 2px solid #add8e6; font-family: "Liberation Sans", Arial, sans-serif; letter-spacing: 0; }
.trow { display: grid; grid-template-columns: 120px 175px 179px 203px 382px 120px 120px 120px 169px 165px; border-bottom: 3px solid #add8e6; }
.trow span { text-align: center; border-right: 2px solid #add8e6; padding-right: 3px; overflow: hidden; }
.trow span:last-child { padding-right: 0; }
.th { color: #191970; font-weight: 700; font-size: 18.400px; height: 27px; }
.th span { height: 24px; line-height: 26px; padding-bottom: 3px; overflow: clip; overflow-clip-margin: content-box; }
.td { color: #6495ed; font-size: 16.200px; height: 25px; }
.td span { height: 22px; line-height: 20px; }
.foot { margin-top: 79px; padding: 46px 0 0 36px; gap: 221px; background: var(--dx) top / 100% 1px no-repeat; height: 250px; }
.exec { width: 256px; padding-left: 55px; letter-spacing: .05px; }
.url { width: 262px; padding-left: 4px; color: #191970; }
.vscroll { background: #e8e8ec; display: flex; flex-direction: column; padding: 8px 0 7px 5px; }
.vthumb { width: 11px; height: 468px; margin: 51px 0 auto; background: #c2c3c9; }
.hscroll { background: #e8e8ec; display: flex; padding: 5px 7px 0 8px; }
.hthumb { width: 1550px; height: 11px; margin: 0 auto 0 76px; background: #c2c3c9; }
.groups { flex: 1; display: grid; grid-template-columns: 884px 882px; background: #dee1e9; color: #000; }
.grp { display: flex; padding: 6px 15px 0 4px; gap: 21px; }
.grp span { padding-top: 6px; }
.gcaret { margin: 13px 0 0 auto; }

.docs { flex: 1; background: #35436b; color: #fff; }
.docs-head { height: 28px; background: #3d5081; padding-left: 10px; display: flex; align-items: center; gap: 7px; }
.proj { margin: 7px 0 0 10px; height: 20px; line-height: 20px; color: #b5c5ea; font-size: 13px; letter-spacing: -.1px; }
.doc { height: 26px; margin-left: 10px; padding-left: 5px; line-height: 26px; width: 105px; letter-spacing: -.15px; }
.doc.sel { background: #f5cc84; color: #1e1e1e; font-weight: 700; letter-spacing: -.1px; font-size: 14.500px; }

.status { height: 25px; flex: none; background: #40508d; color: #fff; display: flex; align-items: center; padding-left: 5px; padding-top: 2px; }
.status > span:not(.bell) { padding-top: 3px; }
.ready { margin-left: 10px; width: 1407px; letter-spacing: 0; }
.status .src { margin-left: 10px; width: 156px; letter-spacing: -.08px; }
.repo-i { margin-left: 28px; }
.repo { margin-left: 8px; width: 122px; letter-spacing: -.05px; }
.bell { margin-left: 27px; width: 25px; display: flex; padding-top: 3px; }
.bell em { width: 16px; height: 16px; margin: 7px 0 0 -8px; border-radius: 50%; background: #e51400; font-style: normal; font-size: 12px; line-height: 15px; text-align: center; flex: none; }
.rgrip { margin: 6px 0 0 19px; }

.watermark { position: absolute; left: 1554px; top: 913px; color: rgba(150, 150, 150, .6); font-size: 25px; line-height: 36px; letter-spacing: -.55px; }
.watermark p { margin: 0; font-size: 18px; line-height: 23px; letter-spacing: -.3px; }

.taskbar {
  position: absolute;
  left: 0;
  top: 1020px;
  width: 1920px;
  height: 60px;
  border-top: 1px solid #b5bac8;
  background: linear-gradient(90deg, #dce8f2, #dde8f4 25%, #d5e0f3 32%, #d8def0 50%, #d5e0f2 66%, #d9dbec 74%, #dfe9f4 82%);
  display: flex;
  align-items: center;
}
.sun { margin: -3px 0 0 28px; }
.weather { width: 438px; margin: -1px 0 0 13px; display: flex; flex-direction: column; }
.weather span { line-height: 20px; font-size: 14px; letter-spacing: -.1px; }
.weather .ar { font-family: "DejaVu Sans", sans-serif; font-size: 14px; color: #5f6266; letter-spacing: 0; }
.search { width: 273px; height: 39px; margin: -1px 0 0 16px; border: 1px solid #c3cbe0; border-radius: 20px; background: #f3f6fc; display: flex; align-items: center; padding-left: 13px; }
.search span { margin-left: 12px; width: 161px; font-size: 17px; color: #5c5c5c; letter-spacing: -.5px; }
.scene { margin-top: 4px; }
.apps { display: flex; margin-left: 4px; }
.app { width: 48px; height: 48px; margin: 0 3.500px; display: flex; align-items: center; justify-content: center; position: relative; }
.app svg { margin-top: -2px; }
.app.on { background: #ebeef7; border-radius: 6px; box-shadow: 0 0 1px #aaa; }
.app.run::after, .app.on::after { content: ""; position: absolute; bottom: 0; width: 8px; height: 4px; border-radius: 2px; background: #80848c; }
.app.on::after { width: 20px; background: #0078d7; }
.tletter { fill: #fff; font: 700 11px "Open Sans", sans-serif; }
.pdf { fill: #fff; font: 7.500px "Open Sans", sans-serif; }
.pdfs { fill: #f6cfc8; font: 4.500px "Open Sans", sans-serif; letter-spacing: -.2px; }
.tray { margin-left: auto; margin-right: 25px; display: flex; align-items: center; color: #1a1a1a; }
.lang { margin-left: 27px; width: 51px; font-size: 14px; }
.tray svg + svg { margin-left: 10px; }
.clock { width: 82px; margin-right: 11px; text-align: right; display: flex; flex-direction: column; line-height: 20px; font-size: 14.500px; letter-spacing: -.05px; }
```
